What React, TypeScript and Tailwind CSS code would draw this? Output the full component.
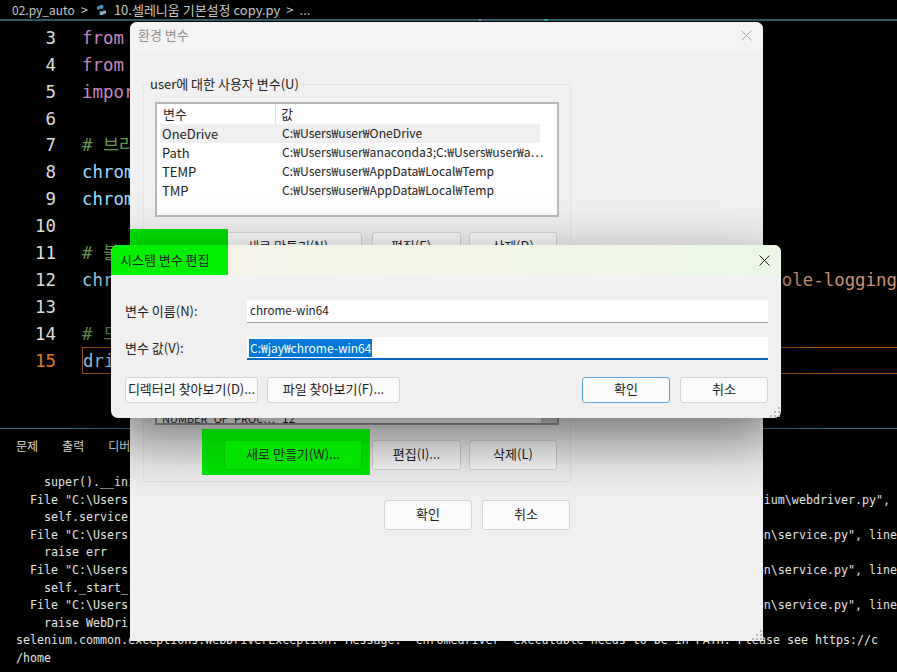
const uiFont = "font-['Noto_Sans_CJK_KR','Noto_Sans',sans-serif]";

const codeLines = [
  { n: 3, text: 'from', color: 'text-[#c586c0]' },
  { n: 4, text: 'from', color: 'text-[#c586c0]' },
  { n: 5, text: 'import', color: 'text-[#c586c0]' },
  { n: 6, text: '', color: '' },
  { n: 7, text: '# 브라우저', color: 'text-[#6a9955]' },
  { n: 8, text: 'chrome', color: 'text-[#9cdcfe]' },
  { n: 9, text: 'chrome', color: 'text-[#9cdcfe]' },
  { n: 10, text: '', color: '' },
  { n: 11, text: '# 불필요', color: 'text-[#6a9955]' },
  { n: 12, text: 'chrome', color: 'text-[#9cdcfe]' },
  { n: 13, text: '', color: '' },
  { n: 14, text: '# 드라이버', color: 'text-[#6a9955]' },
  { n: 15, text: 'driver', color: 'text-[#9cdcfe]' },
];

const terminalLines = [
  { left: '    super().__init__', right: '' },
  { left: '  File "C:\\Users', right: 'nium\\webdriver.py", ' },
  { left: '    self.service', right: '' },
  { left: '  File "C:\\Users', right: 'on\\service.py", line' },
  { left: '    raise err', right: '' },
  { left: '  File "C:\\Users', right: 'on\\service.py", line' },
  { left: '    self._start_', right: '' },
  { left: '  File "C:\\Users', right: 'on\\service.py", line' },
  { left: '    raise WebDri', right: '' },
];

const userVars = [
  ['OneDrive', 'C:₩Users₩user₩OneDrive'],
  ['Path', 'C:₩Users₩user₩anaconda3;C:₩Users₩user₩a…'],
  ['TEMP', 'C:₩Users₩user₩AppData₩Local₩Temp'],
  ['TMP', 'C:₩Users₩user₩AppData₩Local₩Temp'],
];

function WinButton({ label, className = '' }: { label: string; className?: string }) {
  return (
    <button className={`flex items-center justify-center rounded-[3px] border bg-[#fbfbfb] pb-[2px] text-[13px] text-[#1b1b1b] ${className}`}>
      {label}
    </button>
  );
}

function ButtonRow({ labels }: { labels: string[] }) {
  return (
    <div className="mt-[15px] flex justify-end pr-[2px]">
      <WinButton label={labels[0]} className="h-[30px] w-[138px] border-[#d4d4d4]" />
      <WinButton label={labels[1]} className="ml-[10px] h-[30px] w-[89px] border-[#d4d4d4]" />
      <WinButton label={labels[2]} className="ml-[8px] h-[30px] w-[88px] border-[#d4d4d4]" />
    </div>
  );
}

function CloseIcon({ className = '' }: { className?: string }) {
  return (
    <svg width="11" height="11" viewBox="0 0 11 11" className={className}>
      <path d="M.5.5l10 10M10.500.5l-10 10" stroke="currentColor" strokeWidth="1" fill="none" />
    </svg>
  );
}

function PythonIcon() {
  return (
    <svg width="9" height="10" viewBox="0 0 10 11" className="mr-[2px] ml-[3px]">
      <path d="M3 0h4v4H3v1H0V2.500Q0 1 2 1h1z" fill="#4b8bbe" />
      <path d="M7 11H3V7h4V6h3v2.500Q10 10 8 10H7z" fill="#7fb2c9" />
    </svg>
  );
}

function Grip() {
  return (
    <svg width="11" height="11" viewBox="0 0 11 11" className="absolute right-[1px] bottom-[1px] text-[#b5b5b5]">
      <path d="M9 1h2v2H9zM5 5h2v2H5zM9 5h2v2H9zM1 9h2v2H1zM5 9h2v2H5zM9 9h2v2H9z" fill="currentColor" />
    </svg>
  );
}

export default function App() {
  return (
    <div className="relative h-[672px] w-[897px] overflow-hidden bg-black">
      <div className="flex h-full flex-col">
        {/* breadcrumb */}
        <div className={`flex h-[19px] items-center gap-[6px] pl-[12px] text-[13px] text-[#c8c8c8] ${uiFont}`}>
          <span className="text-[12px]">02.py_auto</span>
          <span>&gt;</span>
          <PythonIcon />
          <span>10.셀레니움 기본설정 copy.py</span>
          <span>&gt;</span>
          <span>...</span>
        </div>
        <div className="h-[2px] bg-[#2f5a68]" />

        {/* editor */}
        <div className="flex h-[407px] flex-col pt-[3.500px] font-['DejaVu_Sans_Mono','Noto_Sans_CJK_KR',monospace] text-[17.4px]">
          {codeLines.map((line) => (
            <div key={line.n} className="flex h-[26.9px] items-stretch">
              <span className={`flex w-[56px] items-center justify-end ${line.n === 15 ? 'text-[#e07b1a]' : 'text-[#dedede]'}`}>
                {line.n}
              </span>
              <div
                className={`ml-[26px] flex flex-1 items-center whitespace-pre ${line.color} ${line.n === 15 ? 'border border-r-0 border-[#a85c0c]' : ''}`}
              >
                <span>{line.text}</span>
                {line.n === 12 && <span className="ml-auto text-[#ce9178]">ole-logging</span>}
              </div>
            </div>
          ))}
        </div>

        {/* terminal */}
        <div className="h-[1px] bg-[#2f6f80]" />
        <div className={`flex h-[33px] items-center gap-[24px] pl-[16px] text-[12px] text-[#d8d8d8] ${uiFont}`}>
          <span>문제</span>
          <span>출력</span>
          <span>디버그</span>
        </div>
        <div className="flex flex-col pt-[12px] pl-[16px] font-['DejaVu_Sans_Mono',monospace] text-[11.65px] leading-[17.6px] text-[#e4e4e4]">
          {terminalLines.map((line, i) => (
            <div key={i} className="flex h-[17.6px] justify-between whitespace-pre">
              <span>{line.left}</span>
              <span>{line.right}</span>
            </div>
          ))}
          <div className="whitespace-pre">selenium.common.exceptions.WebDriverException: Message: 'chromedriver' executable needs to be in PATH. Please see https://c</div>
          <div>/home</div>
        </div>
      </div>

      {/* overview ruler ticks */}
      <div className="absolute top-[19px] left-[479px] h-[2px] w-[2px] bg-[#a070b0]" />
      <div className="absolute top-[19px] left-[544px] h-[2px] w-[4px] bg-[#30a090]" />

      {/* 환경 변수 window */}
      <div className={`absolute top-[22px] left-[130px] flex h-[619px] w-[633px] flex-col rounded-t-[7px] bg-[#f0f0f0] text-[13px] text-[#222] ${uiFont}`}>
        <div className="flex h-[28px] shrink-0 items-center justify-between rounded-t-[7px] bg-[#f3f3f3] pr-[11px] pb-[2px] pl-[8px] text-[#8f8f8f]">
          <span>환경 변수</span>
          <CloseIcon className="text-[#a9a9a9]" />
        </div>
        <div className="flex w-[441px] flex-col pt-[26px] pl-[13px]">
          <fieldset className="h-[205px] border border-[#e4e4e4] px-[11px]">
            <legend className="-ml-[5px] leading-[16px] text-[#222]">user에 대한 사용자 변수(U)</legend>
            <div className="mt-[10px] h-[115px] border-2 border-[#b4b8bc] bg-white px-[3px]">
              <div className="flex h-[20px] w-[380px] items-center">
                <span className="w-[116px] border-r border-[#e0e0e0] pl-[3px]">변수</span>
                <span className="pl-[5px]">값</span>
              </div>
              {userVars.map(([name, value], i) => (
                <div key={name} className={`flex h-[19px] w-[380px] items-center whitespace-nowrap ${i === 0 ? 'bg-[#f0f0f0]' : ''}`}>
                  <span className="w-[122px] shrink-0 pl-[2px]">{name}</span>
                  <span className="text-[12.2px]">{value}</span>
                </div>
              ))}
            </div>
            <ButtonRow labels={['새로 만들기(N)...', '편집(E)...', '삭제(D)']} />
          </fieldset>
          <fieldset className="mt-[3px] h-[198px] border border-[#e4e4e4] px-[11px]">
            <div className="mt-[33px] flex h-[107px] items-end overflow-hidden border-2 border-[#9a9a9a] bg-white text-[11px]">
              <span className="-mb-[3px] w-[125px] shrink-0 pl-[5px] leading-[16px] whitespace-nowrap">NUMBER_OF_PROC…</span>
              <span className="-mb-[3px] flex-1 text-[12px] leading-[16px]">12</span>
              <div className="h-[8px] w-[16px] bg-[#d0d0d0]" />
            </div>
            <ButtonRow labels={['새로 만들기(W)...', '편집(I)...', '삭제(L)']} />
          </fieldset>
          <div className="mt-[18px] flex justify-end gap-[10px] pr-[1px]">
            <WinButton label="확인" className="h-[30px] w-[88px] border-[#d4d4d4]" />
            <WinButton label="취소" className="h-[30px] w-[88px] border-[#d4d4d4]" />
          </div>
        </div>
        <Grip />
      </div>

      {/* green strip above the edit window */}
      <div className="absolute top-[229px] left-[130px] h-[16px] w-[98px] bg-[#00e000]" />

      {/* 시스템 변수 편집 window */}
      <div className={`absolute top-[245px] left-[111px] z-10 flex h-[173px] w-[670px] flex-col rounded-[7px] bg-[#f0f0f0] text-[13px] text-[#222] shadow-[0_20px_60px_rgba(0,0,0,0.55)] ${uiFont}`}>
        <div className="flex h-[30px] shrink-0 items-center justify-between rounded-t-[7px] bg-linear-to-r from-[#f7f2e8] to-[#ebf7e4] pr-[11px]">
          <span className="flex h-full w-[117px] items-center rounded-tl-[7px] bg-[#00f000] pl-[9px] whitespace-nowrap">시스템 변수 편집</span>
          <CloseIcon className="text-[#222]" />
        </div>
        <div className="flex flex-col gap-[14px] px-[13px] pt-[25px]">
          <div className="flex items-center">
            <span className="w-[123px] pb-[2px] pl-[1px]">변수 이름(N):</span>
            <div className="flex h-[23px] flex-1 items-center border-b border-[#a0a0a0] bg-white pb-[2px] pl-[3px] text-[11.7px]">chrome-win64</div>
          </div>
          <div className="flex items-center">
            <span className="w-[123px] pb-[2px] pl-[1px]">변수 값(V):</span>
            <div className="flex h-[23px] flex-1 items-center border-b-2 border-[#0067c0] bg-white pl-[2px] text-[12px]">
              <span className="bg-[#0078d7] px-[1px] text-white">C:₩jay₩chrome-win64</span>
            </div>
          </div>
        </div>
        <div className="mt-[17px] flex pr-[13px] pl-[14px]">
          <WinButton label="디렉터리 찾아보기(D)..." className="h-[26px] w-[133px] border-[#d4d4d4]" />
          <WinButton label="파일 찾아보기(F)..." className="ml-[9px] h-[26px] w-[133px] border-[#d4d4d4]" />
          <WinButton label="확인" className="ml-auto h-[26px] w-[88px] border-[#5aa4e0]" />
          <WinButton label="취소" className="ml-[10px] h-[26px] w-[88px] border-[#d4d4d4]" />
        </div>
        <Grip />
      </div>

      {/* highlight patch over the 새로 만들기 button */}
      <div className="absolute top-[429px] left-[202px] z-20 flex h-[46px] w-[168px] bg-linear-to-b from-[#00c400] to-[#00e000] pt-[11px] pr-[8px] pb-[5px] pl-[22px]">
        <div className={`flex flex-1 items-center justify-center rounded-[3px] border border-[#00c800] bg-[#00e400] pb-[2px] text-[13px] text-[#222] ${uiFont}`}>
          새로 만들기(W)...
        </div>
      </div>
    </div>
  );
}
